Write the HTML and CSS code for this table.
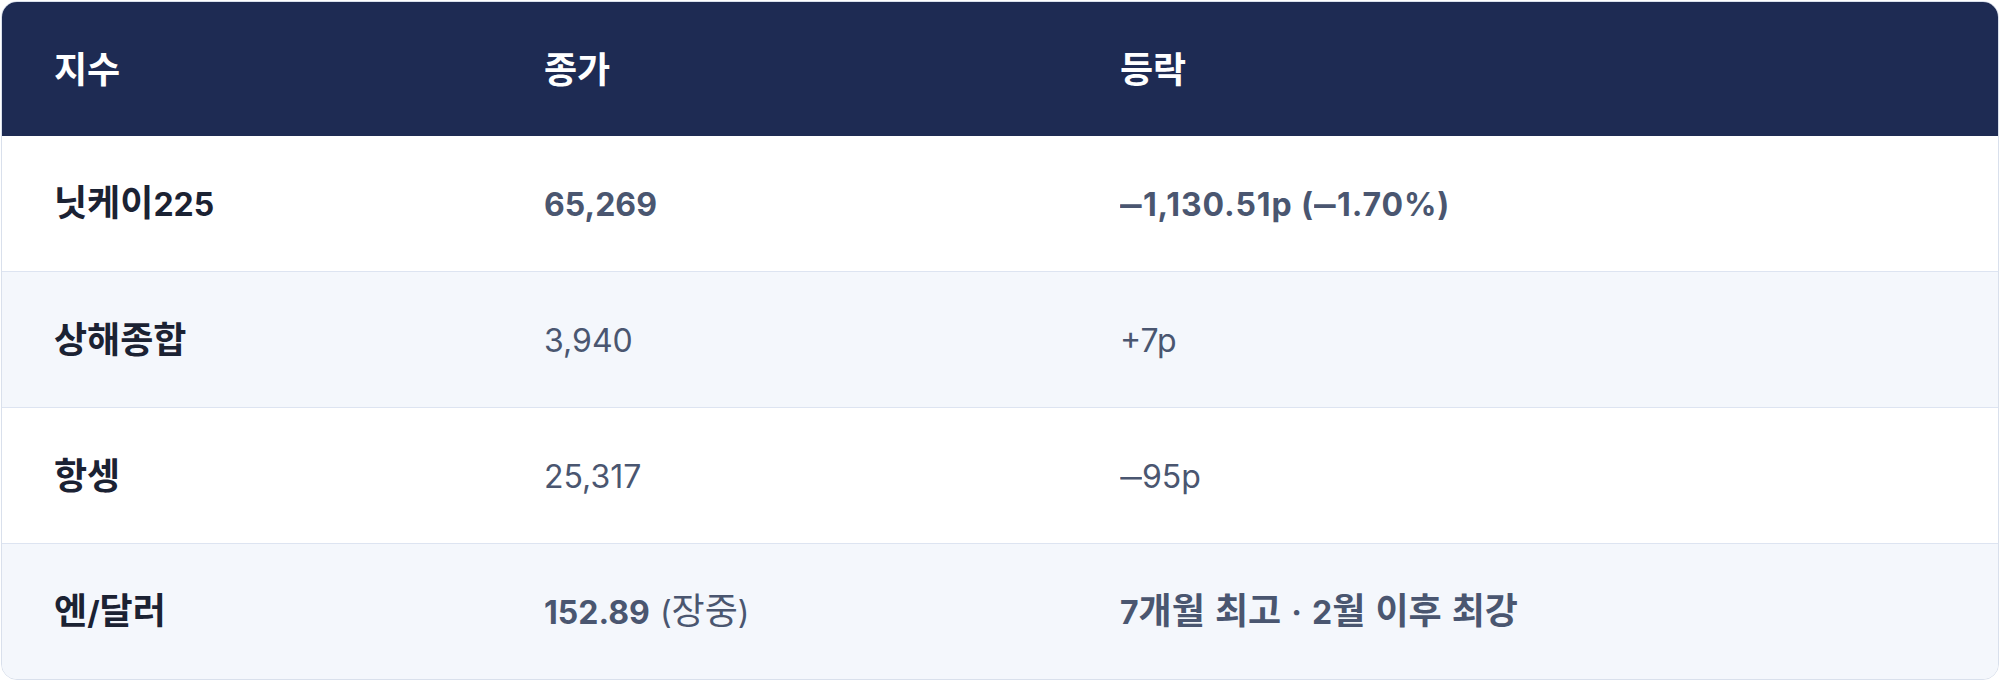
FILE: index.html
```html
<!DOCTYPE html>
<html lang="ko">
<head>
<meta charset="utf-8">
<title>아시아 증시</title>
<link rel="stylesheet" href="styles.css">
</head>
<body>
<div class="card">
  <div class="row head">
    <div class="cell">지수</div>
    <div class="cell">종가</div>
    <div class="cell">등락</div>
  </div>
  <div class="row">
    <div class="cell name">닛케이<span class="n">225</span></div>
    <div class="cell val strong"><span class="n">65,269</span></div>
    <div class="cell val strong"><span class="n wide"><span class="dash">–</span>1,130.51p (<span class="dash">–</span>1.70%)</span></div>
  </div>
  <div class="row alt">
    <div class="cell name">상해종합</div>
    <div class="cell val"><span class="n">3,940</span></div>
    <div class="cell val"><span class="n">+7p</span></div>
  </div>
  <div class="row">
    <div class="cell name">항셍</div>
    <div class="cell val"><span class="n">25,317</span></div>
    <div class="cell val"><span class="n"><span class="dash">–</span>95p</span></div>
  </div>
  <div class="row alt last">
    <div class="cell name">엔<span class="n">/</span>달러</div>
    <div class="cell val"><b class="strong n">152.89</b> <span class="n">(</span>장중<span class="n">)</span></div>
    <div class="cell val strong"><span class="n">7</span>개월 최고 <span class="n">·</span> <span class="n">2</span>월 이후 최강</div>
  </div>
</div>
</body>
</html>
```
FILE: styles.css
```css
html, body {
  margin: 0;
  padding: 0;
  background: #ffffff;
}
body {
  padding: 1px;
  font-family: "Noto Sans CJK KR", "Noto Sans", sans-serif;
  font-size: 36px;
}
.card {
  border: 1px solid #d9e0ec;
  border-radius: 16px;
  overflow: hidden;
  background: #ffffff;
}
.row {
  display: grid;
  grid-template-columns: 490px 576px 1fr;
  height: 135px;
  border-bottom: 1px solid #dde4f1;
  align-items: center;
}
.row.last {
  border-bottom: none;
}
.row.head {
  background: #1e2b53;
  height: 134px;
  border-bottom: none;
  color: #ffffff;
  font-weight: 700;
}
.row.alt {
  background: #f4f7fc;
}
.cell {
  padding-left: 52px;
  padding-bottom: 3px;
  white-space: nowrap;
  line-height: 1.2;
}
.n {
  font-family: Inter, "Noto Sans", sans-serif;
  font-size: 32px;
}
.wide {
  letter-spacing: 0.9px;
}
.dash {
  display: inline-block;
  transform: scaleX(1.35);
  margin: 0 3px;
}
.name {
  color: #1b2233;
  font-weight: 700;
}
.val {
  color: #4a5670;
  font-weight: 400;
}
.strong {
  font-weight: 700;
}
```
